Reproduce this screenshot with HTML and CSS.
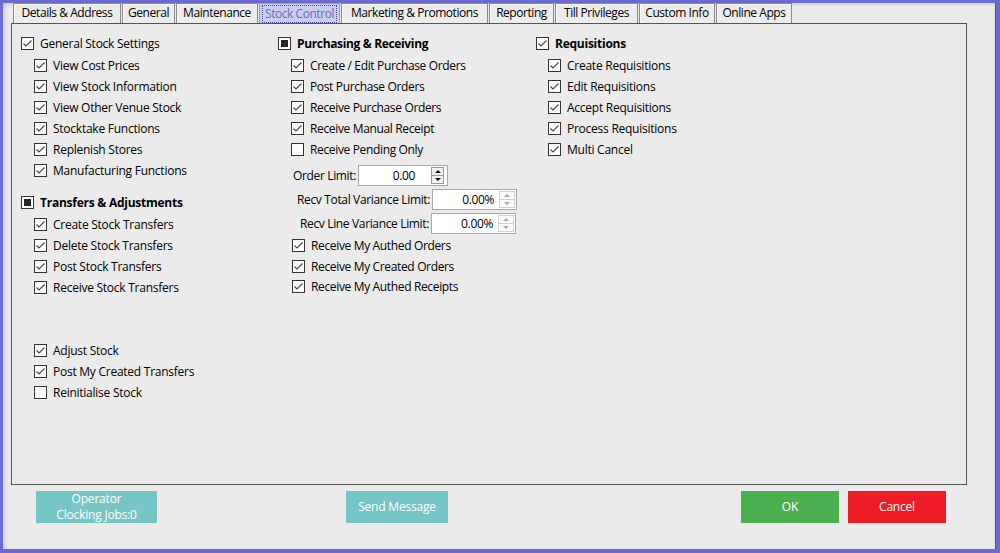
FILE: index.html
```html
<!DOCTYPE html>
<html>
<head>
<meta charset="utf-8">
<link rel="stylesheet" href="styles.css">
</head>
<body>
<div class="window">
  <div class="tabs">
    <div class="tab t1">Details &amp; Address</div>
    <div class="tab t2">General</div>
    <div class="tab t3">Maintenance</div>
    <div class="tab t4 active"><span class="focus">Stock Control</span></div>
    <div class="tab t5">Marketing &amp; Promotions</div>
    <div class="tab t6">Reporting</div>
    <div class="tab t7">Till Privileges</div>
    <div class="tab t8">Custom Info</div>
    <div class="tab t9">Online Apps</div>
  </div>
  <div class="content">
    <div class="col col1">
      <div class="row parent"><span class="cb"><svg viewBox="0 0 11 11"><polyline points="1.5,5.5 4,8 9.5,2.5"/></svg></span><span class="lbl">General Stock Settings</span></div>
      <div class="row child"><span class="cb"><svg viewBox="0 0 11 11"><polyline points="1.5,5.5 4,8 9.5,2.5"/></svg></span><span class="lbl">View Cost Prices</span></div>
      <div class="row child"><span class="cb"><svg viewBox="0 0 11 11"><polyline points="1.5,5.5 4,8 9.5,2.5"/></svg></span><span class="lbl">View Stock Information</span></div>
      <div class="row child"><span class="cb"><svg viewBox="0 0 11 11"><polyline points="1.5,5.5 4,8 9.5,2.5"/></svg></span><span class="lbl">View Other Venue Stock</span></div>
      <div class="row child"><span class="cb"><svg viewBox="0 0 11 11"><polyline points="1.5,5.5 4,8 9.5,2.5"/></svg></span><span class="lbl">Stocktake Functions</span></div>
      <div class="row child"><span class="cb"><svg viewBox="0 0 11 11"><polyline points="1.5,5.5 4,8 9.5,2.5"/></svg></span><span class="lbl">Replenish Stores</span></div>
      <div class="row child"><span class="cb"><svg viewBox="0 0 11 11"><polyline points="1.5,5.5 4,8 9.5,2.5"/></svg></span><span class="lbl">Manufacturing Functions</span></div>

      <div class="row parent group2"><span class="cb ind"><span class="sq"></span></span><span class="lbl bold">Transfers &amp; Adjustments</span></div>
      <div class="row child"><span class="cb"><svg viewBox="0 0 11 11"><polyline points="1.5,5.5 4,8 9.5,2.5"/></svg></span><span class="lbl">Create Stock Transfers</span></div>
      <div class="row child"><span class="cb"><svg viewBox="0 0 11 11"><polyline points="1.5,5.5 4,8 9.5,2.5"/></svg></span><span class="lbl">Delete Stock Transfers</span></div>
      <div class="row child"><span class="cb"><svg viewBox="0 0 11 11"><polyline points="1.5,5.5 4,8 9.5,2.5"/></svg></span><span class="lbl">Post Stock Transfers</span></div>
      <div class="row child"><span class="cb"><svg viewBox="0 0 11 11"><polyline points="1.5,5.5 4,8 9.5,2.5"/></svg></span><span class="lbl">Receive Stock Transfers</span></div>

      <div class="row child group3"><span class="cb"><svg viewBox="0 0 11 11"><polyline points="1.5,5.5 4,8 9.5,2.5"/></svg></span><span class="lbl">Adjust Stock</span></div>
      <div class="row child"><span class="cb"><svg viewBox="0 0 11 11"><polyline points="1.5,5.5 4,8 9.5,2.5"/></svg></span><span class="lbl">Post My Created Transfers</span></div>
      <div class="row child"><span class="cb"></span><span class="lbl">Reinitialise Stock</span></div>
    </div>

    <div class="col col2">
      <div class="row parent"><span class="cb ind"><span class="sq"></span></span><span class="lbl bold">Purchasing &amp; Receiving</span></div>
      <div class="row child"><span class="cb"><svg viewBox="0 0 11 11"><polyline points="1.5,5.5 4,8 9.5,2.5"/></svg></span><span class="lbl">Create / Edit Purchase Orders</span></div>
      <div class="row child"><span class="cb"><svg viewBox="0 0 11 11"><polyline points="1.5,5.5 4,8 9.5,2.5"/></svg></span><span class="lbl">Post Purchase Orders</span></div>
      <div class="row child"><span class="cb"><svg viewBox="0 0 11 11"><polyline points="1.5,5.5 4,8 9.5,2.5"/></svg></span><span class="lbl">Receive Purchase Orders</span></div>
      <div class="row child"><span class="cb"><svg viewBox="0 0 11 11"><polyline points="1.5,5.5 4,8 9.5,2.5"/></svg></span><span class="lbl">Receive Manual Receipt</span></div>
      <div class="row child"><span class="cb"></span><span class="lbl">Receive Pending Only</span></div>

      <div class="field f-order">
        <span class="flabel">Order Limit:</span>
        <div class="spin spin-order">
          <span class="val">0.00</span>
          <span class="arrows"><span class="arr up"></span><span class="arr down"></span></span>
        </div>
      </div>
      <div class="field f-total">
        <span class="flabel">Recv Total Variance Limit:</span>
        <div class="spin spin-var">
          <span class="val">0.00%</span>
          <span class="arrows dis"><span class="arr up"></span><span class="arr down"></span></span>
        </div>
      </div>
      <div class="field f-line">
        <span class="flabel">Recv Line Variance Limit:</span>
        <div class="spin spin-var">
          <span class="val">0.00%</span>
          <span class="arrows dis"><span class="arr up"></span><span class="arr down"></span></span>
        </div>
      </div>

      <div class="row child after"><span class="cb"><svg viewBox="0 0 11 11"><polyline points="1.5,5.5 4,8 9.5,2.5"/></svg></span><span class="lbl">Receive My Authed Orders</span></div>
      <div class="row child after2"><span class="cb"><svg viewBox="0 0 11 11"><polyline points="1.5,5.5 4,8 9.5,2.5"/></svg></span><span class="lbl">Receive My Created Orders</span></div>
      <div class="row child after3"><span class="cb"><svg viewBox="0 0 11 11"><polyline points="1.5,5.5 4,8 9.5,2.5"/></svg></span><span class="lbl">Receive My Authed Receipts</span></div>
    </div>

    <div class="col col3">
      <div class="row parent"><span class="cb"><svg viewBox="0 0 11 11"><polyline points="1.5,5.5 4,8 9.5,2.5"/></svg></span><span class="lbl bold">Requisitions</span></div>
      <div class="row child c3"><span class="cb"><svg viewBox="0 0 11 11"><polyline points="1.5,5.5 4,8 9.5,2.5"/></svg></span><span class="lbl">Create Requisitions</span></div>
      <div class="row child c3"><span class="cb"><svg viewBox="0 0 11 11"><polyline points="1.5,5.5 4,8 9.5,2.5"/></svg></span><span class="lbl">Edit Requisitions</span></div>
      <div class="row child c3"><span class="cb"><svg viewBox="0 0 11 11"><polyline points="1.5,5.5 4,8 9.5,2.5"/></svg></span><span class="lbl">Accept Requisitions</span></div>
      <div class="row child c3"><span class="cb"><svg viewBox="0 0 11 11"><polyline points="1.5,5.5 4,8 9.5,2.5"/></svg></span><span class="lbl">Process Requisitions</span></div>
      <div class="row child c3"><span class="cb"><svg viewBox="0 0 11 11"><polyline points="1.5,5.5 4,8 9.5,2.5"/></svg></span><span class="lbl">Multi Cancel</span></div>
    </div>
  </div>

  <div class="buttons">
    <div class="btn teal op">Operator<br>Clocking Jobs:0</div>
    <div class="btn teal send">Send Message</div>
    <div class="btn green ok">OK</div>
    <div class="btn red cancel">Cancel</div>
  </div>
</div>
</body>
</html>
```

FILE: styles.css
```css
* { box-sizing: border-box; }
html, body {
  margin: 0;
  padding: 0;
  width: 1000px;
  height: 553px;
  overflow: hidden;
  background: #6b6bcf;
}
body {
  font-family: "Open Sans", "Noto Sans", sans-serif;
  font-size: 12px;
  color: #000;
  padding: 3px 4px 4px 3px;
}
.window {
  width: 993px;
  height: 546px;
  background: #ebebeb;
  border-right: 1px solid #555;
  box-shadow: inset 4px 0 4px -2px rgba(0,0,0,0.14), inset 0 4px 4px -2px rgba(0,0,0,0.10);
  padding: 0 0 0 8px;
  display: flex;
  flex-direction: column;
}
.tabs {
  display: flex;
  height: 20px;
  padding-left: 2px;
}
.tab {
  height: 20px;
  border: 1px solid #8a8a8a;
  border-bottom: none;
  box-shadow: inset 1px 1px 0 #fafafa;
  background: #ececec;
  margin-right: 1px;
  padding: 0;
  text-align: center;
  line-height: 18px;
  white-space: nowrap;
  letter-spacing: -0.45px;
}
.t1 { width: 108px; }
.t2 { width: 53px; }
.t3 { width: 82px; }
.t4 { width: 81px; }
.t5 { width: 147px; }
.t6 { width: 65px; }
.t7 { width: 83px; }
.t8 { width: 76px; }
.t9 { width: 76px; }
.tab.active {
  background: #c9cdee;
  color: #6b6bc8;
  padding: 1px 2px 0;
  box-shadow: none;
  border-color: #9a9ad0;
}
.tab.active .focus {
  display: block;
  height: 18px;
  line-height: 16px;
  border: 1px dotted #4a4a9a;
  padding: 0;
}
.content {
  width: 956px;
  height: 462px;
  border: 1px solid #555;
  display: flex;
  padding: 9px 0 0 9px;
}
.col { display: flex; flex-direction: column; }
.col1 { width: 257px; }
.col2 { width: 258px; }
.col3 { width: 300px; }
.row {
  height: 21px;
  display: flex;
  align-items: center;
  white-space: nowrap;
  letter-spacing: -0.25px;
}
.row.parent { margin-bottom: 1px; }
.row.child { padding-left: 13px; }
.row.c3 { padding-left: 12px; }
.row.group2 { margin-top: 11px; }
.row.group3 { margin-top: 42px; }
.col2 .row .lbl { letter-spacing: -0.35px; }
.cb {
  width: 13px;
  height: 13px;
  border: 1px solid #333;
  background: #fff;
  margin-right: 6px;
  flex: none;
  display: flex;
  align-items: center;
  justify-content: center;
}
.cb svg {
  width: 11px;
  height: 11px;
  fill: none;
  stroke: #444;
  stroke-width: 1.1;
}
.cb .sq {
  width: 7px;
  height: 7px;
  background: #262626;
}
.bold { font-weight: 700; }

.field {
  display: flex;
  align-items: center;
  height: 21px;
  white-space: nowrap;
  letter-spacing: -0.35px;
}
.f-order { margin-top: 5px; padding-left: 15px; }
.f-total { margin-top: 3px; padding-left: 19px; }
.f-line { margin-top: 3px; padding-left: 22px; }
.flabel { margin-right: 2px; }
.spin {
  height: 21px;
  border: 1px solid #a8a8a8;
  background: #fff;
  display: flex;
  align-items: center;
}
.spin-order { width: 90px; }
.spin-order .val { flex: 1; text-align: right; padding-right: 16px; }
.spin-var { width: 85px; }
.spin-var .val { flex: 1; text-align: right; padding-right: 5px; }
.arrows {
  display: flex;
  flex-direction: column;
  width: 13px;
  height: 17px;
  margin-right: 3px;
}
.arrows.dis { width: 16px; margin-right: 1px; }
.arr {
  flex: 1;
  border: 1px solid #9a9a9a;
  background: #f2f2f2;
  display: flex;
  align-items: center;
  justify-content: center;
}
.arr + .arr { border-top: none; }
.arr::after {
  content: "";
  width: 0;
  height: 0;
  border-left: 3px solid transparent;
  border-right: 3px solid transparent;
}
.arr.up::after { border-bottom: 3px solid #111; }
.arr.down::after { border-top: 3px solid #111; }
.dis .arr { border-color: #d0d0d0; background: #fbfbfb; }
.dis .arr.up::after { border-bottom-color: #a8a8a8; }
.dis .arr.down::after { border-top-color: #a8a8a8; }

.row.after { margin-top: 1px; padding-left: 14px; }
.row.after2, .row.after3 { padding-left: 14px; }
.row.after3 { margin-top: -1px; }

.buttons {
  display: flex;
  margin-top: 6px;
  padding-left: 25px;
  height: 32px;
}
.btn {
  height: 32px;
  color: #fff;
  display: flex;
  align-items: center;
  justify-content: center;
  text-align: center;
  font-size: 12px;
  line-height: 16px;
  letter-spacing: -0.2px;
}
.teal { background: #76c6c6; }
.green { background: #4caf50; }
.red { background: #ee1c25; }
.op { width: 121px; }
.send { width: 102px; margin-left: 189px; }
.ok { width: 98px; margin-left: 293px; }
.cancel { width: 98px; margin-left: 9px; }
```
